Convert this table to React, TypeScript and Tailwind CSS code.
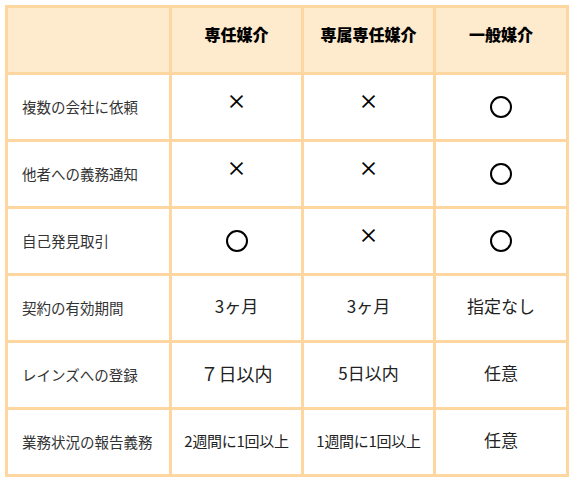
import React from "react";

const font = { fontFamily: '"Noto Sans CJK JP", "Noto Sans", sans-serif' };

type Row = { label: string; cells: React.ReactNode[] };

const Cross = () => (
  <span className="inline-block text-[20px] leading-none font-medium text-black -translate-y-[3px]">×</span>
);
const Circle = () => (
  <span className="inline-block w-[22px] h-[22px] rounded-full border-2 border-black align-middle" />
);

const rows: Row[] = [
  { label: "複数の会社に依頼", cells: [<Cross />, <Cross />, <Circle />] },
  { label: "他者への義務通知", cells: [<Cross />, <Cross />, <Circle />] },
  { label: "自己発見取引", cells: [<Circle />, <Cross />, <Circle />] },
  {
    label: "契約の有効期間",
    cells: [
      <span className="text-[17px]">3ヶ月</span>,
      <span className="text-[17px]">3ヶ月</span>,
      <span className="text-[17px]">指定なし</span>,
    ],
  },
  {
    label: "レインズへの登録",
    cells: [
      <span className="text-[18px]">７日以内</span>,
      <span className="text-[17px]">5日以内</span>,
      <span className="text-[17px]">任意</span>,
    ],
  },
  {
    label: "業務状況の報告義務",
    cells: [
      <span className="text-[15px] tracking-[-0.3px]">2週間に1回以上</span>,
      <span className="text-[15px] tracking-[-0.3px]">1週間に1回以上</span>,
      <span className="text-[17px]">任意</span>,
    ],
  },
];

export default function App() {
  return (
    <div className="bg-white w-[577px] h-[485px] p-[5px]" style={font}>
      <table className="table-fixed border-collapse w-[564px] text-[#222]">
        <colgroup>
          <col className="w-[164px]" />
          <col className="w-[132px]" />
          <col className="w-[132px]" />
          <col className="w-[133px]" />
        </colgroup>
        <thead>
          <tr className="h-[67px] bg-[#feeacd]">
            <th className="border-[3px] border-[#fed7a0]" />
            {["専任媒介", "専属専任媒介", "一般媒介"].map((h) => (
              <th
                key={h}
                className="border-[3px] border-[#fed7a0] text-[16px] font-black text-black pb-[12px]"
              >
                {h}
              </th>
            ))}
          </tr>
        </thead>
        <tbody>
          {rows.map((r) => (
            <tr key={r.label} className="h-[67px]">
              <td className="border-[3px] border-[#fed7a0] pl-[14px] text-[14.5px] text-[#333]">
                {r.label}
              </td>
              {r.cells.map((c, i) => (
                <td
                  key={i}
                  className="border-[3px] border-[#fed7a0] text-center align-middle pb-[4px]"
                >
                  {c}
                </td>
              ))}
            </tr>
          ))}
        </tbody>
      </table>
    </div>
  );
}
